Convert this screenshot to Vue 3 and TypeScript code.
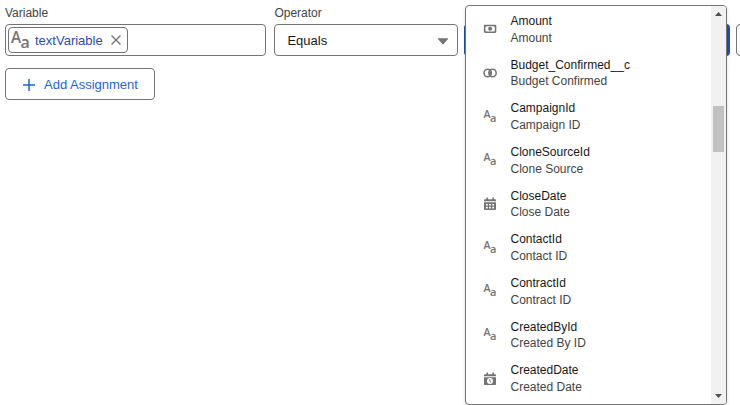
<script setup lang="ts">
type IconKind = 'currency' | 'boolean' | 'text' | 'date' | 'datetime'

interface FieldOption {
  name: string
  label: string
  icon: IconKind
}

const options: FieldOption[] = [
  { name: 'Amount', label: 'Amount', icon: 'currency' },
  { name: 'Budget_Confirmed__c', label: 'Budget Confirmed', icon: 'boolean' },
  { name: 'CampaignId', label: 'Campaign ID', icon: 'text' },
  { name: 'CloneSourceId', label: 'Clone Source', icon: 'text' },
  { name: 'CloseDate', label: 'Close Date', icon: 'date' },
  { name: 'ContactId', label: 'Contact ID', icon: 'text' },
  { name: 'ContractId', label: 'Contract ID', icon: 'text' },
  { name: 'CreatedById', label: 'Created By ID', icon: 'text' },
  { name: 'CreatedDate', label: 'Created Date', icon: 'datetime' },
]
</script>

<template>
  <main class="page">
    <div class="fields">
      <div class="field variable">
        <span class="label">Variable</span>
        <div class="box">
          <div class="pill">
            <svg class="pill-type" viewBox="0 0 20 20">
              <text x="0" y="12.6" font-size="15.3">A</text>
              <text x="9.6" y="18.4" font-size="16">a</text>
            </svg>
            <span class="pill-text">textVariable</span>
            <svg class="close" viewBox="0 0 12 12"><path d="M1.5 1.5l9 9M10.5 1.5l-9 9" /></svg>
          </div>
        </div>
      </div>
      <div class="field operator">
        <span class="label">Operator</span>
        <div class="box select">
          <span>Equals</span>
          <svg class="caret" viewBox="0 0 12 7"><path d="M1.2 .3h9.6q.8 0 .3.7L6.6 6.1q-.6.6-1.2 0L.9 1Q.4.3 1.2.3z" /></svg>
        </div>
      </div>
      <div class="field value">
        <div class="box focused"></div>
        <div class="menu">
          <ul class="list">
            <li v-for="option in options" :key="option.name" class="option">
              <svg class="icon" viewBox="0 0 14 14">
                <template v-if="option.icon === 'text'">
                  <text x="0.5" y="8" font-size="10.6">A</text>
                  <text x="7" y="12" font-size="11">a</text>
                </template>
                <template v-else-if="option.icon === 'currency'">
                  <rect class="line" x="1.6" y="3.4" width="11" height="6.8" rx=".6" />
                  <circle cx="7.1" cy="6.8" r="2" />
                  <path d="M2 4h1.6L2 5.6zM12.2 4h-1.6l1.6 1.6zM2 9.6h1.6L2 8zM12.2 9.6h-1.6L12.2 8z" />
                </template>
                <template v-else-if="option.icon === 'boolean'">
                  <circle class="line" cx="4.7" cy="7" r="3.7" />
                  <circle class="line" cx="9.5" cy="7" r="3.7" />
                  <path d="M7.1 4.6q2.1 2.4 0 4.8q-2.1-2.4 0-4.8z" />
                </template>
                <template v-else>
                  <path d="M3.4 .6h1.7v1.6h4.2V.6H11v1.6h1.2q.8 0 .8.8v1.3H1V3q0-.8.8-.8h1.6z" />
                  <path d="M1 5.3h12v6.9q0 .8-.8.8H1.8q-.8 0-.8-.8z" />
                  <path
                    v-if="option.icon === 'date'"
                    class="cut"
                    d="M3 7h1.8v1.6H3zM6.1 7h1.8v1.6H6.1zM9.2 7H11v1.6H9.2zM3 9.8h1.8v1.6H3zM6.1 9.8h1.8v1.6H6.1zM9.2 9.8H11v1.6H9.2z"
                  />
                  <template v-else>
                    <circle class="cut" cx="7" cy="9.1" r="3" />
                    <path class="hand" d="M6.8 7.2v2l1.4 1.2" />
                  </template>
                </template>
              </svg>
              <div class="copy">
                <span class="name">{{ option.name }}</span>
                <span class="sub">{{ option.label }}</span>
              </div>
            </li>
          </ul>
          <div class="scrollbar">
            <svg class="arrow" viewBox="0 0 7 4"><path d="M3.5 0L7 4H0z" /></svg>
            <div class="track"><div class="thumb"></div></div>
            <svg class="arrow" viewBox="0 0 7 4"><path d="M0 0h7L3.5 4z" /></svg>
          </div>
        </div>
      </div>
      <div class="field next"><div class="box"></div></div>
    </div>
    <button class="add" type="button">
      <svg class="plus" viewBox="0 0 12 12"><path d="M6 0v12M0 6h12" /></svg>
      <span>Add Assignment</span>
    </button>
  </main>
</template>

<style>
body {
  margin: 0;
  background: #fff;
}
</style>

<style scoped>
* {
  box-sizing: border-box;
}
.page {
  width: 740px;
  height: 405px;
  overflow: hidden;
  padding: 5px 0 0 5px;
  font: 13px 'Liberation Sans', Arial, sans-serif;
  color: #181818;
}
.fields {
  display: flex;
  align-items: flex-end;
  height: 51px;
}
.field {
  flex: none;
  position: relative;
}
.label {
  display: block;
  height: 19px;
  line-height: 16px;
  font-size: 12px;
  color: #444;
}
.box {
  height: 32px;
  border: 1px solid #747474;
  border-radius: 4px;
  background: #fff;
}
.variable {
  width: 261px;
  margin-right: 8.4px;
}
.variable .box {
  padding: 2px;
}
.operator {
  width: 183.6px;
  margin-right: 6px;
}
.value {
  width: 266px;
  margin-right: 6px;
}
.next {
  width: 60px;
}
.pill {
  display: flex;
  align-items: center;
  width: 120px;
  height: 26px;
  padding-left: 2px;
  border: 1px solid #747474;
  border-radius: 4px;
}
.pill-type {
  width: 20px;
  height: 20px;
}
.pill-text {
  margin-left: 4px;
  color: #2a4db4;
}
.close {
  width: 12px;
  height: 12px;
  margin-left: 7px;
  fill: none;
  stroke: #747474;
  stroke-width: 1.4;
}
.select {
  display: flex;
  align-items: center;
  justify-content: space-between;
  padding: 0 8px 0 12px;
}
.caret {
  width: 12px;
  height: 7px;
  margin-top: 2px;
  fill: #747474;
}
.focused {
  border: 3px solid #1a4cbd;
}
.menu {
  position: absolute;
  z-index: 2;
  left: 1px;
  top: -19px;
  width: 262px;
  height: 400px;
  display: flex;
  overflow: hidden;
  border: 1px solid #747474;
  border-radius: 4px;
  background: #fff;
  box-shadow: 0 2px 3px rgba(0, 0, 0, 0.16);
}
.list {
  flex: 1;
  margin: 0;
  padding: 1px 0 0 17px;
  list-style: none;
}
.option {
  display: flex;
  align-items: center;
  height: 43.67px;
  padding-top: 1px;
}
.copy {
  display: flex;
  flex-direction: column;
  margin-left: 13.5px;
  margin-top: 0.67px;
  font-size: 12px;
  line-height: 16.5px;
}
.name {
  color: #181818;
}
.sub {
  color: #444;
}
.icon {
  width: 14px;
  height: 14px;
}
.icon,
.pill-type {
  flex: none;
  overflow: visible;
  fill: #747474;
  font-family: 'Open Sans', 'Noto Sans', sans-serif;
  font-weight: 600;
}
.line {
  fill: none;
  stroke: #747474;
  stroke-width: 1.5;
}
.cut {
  fill: #fff;
}
.hand {
  fill: none;
  stroke: #747474;
  stroke-width: 1;
}
.scrollbar {
  width: 15px;
  display: flex;
  flex-direction: column;
  align-items: center;
  justify-content: space-between;
  padding: 6px 0;
  background: #f1f1f1;
}
.arrow {
  width: 7px;
  height: 4px;
  fill: #505050;
}
.track {
  flex: 1;
  padding-top: 90px;
}
.thumb {
  width: 11px;
  height: 46px;
  background: #c1c1c1;
}
.add {
  display: flex;
  align-items: center;
  width: 150px;
  height: 32px;
  margin: 12px 0 0;
  padding: 0 0 0 17px;
  border: 1px solid #747474;
  border-radius: 4px;
  background: #fff;
  color: #1b66d6;
  font: inherit;
}
.plus {
  width: 12px;
  height: 12px;
  margin: 2px 9px 0 0;
  fill: none;
  stroke: #1b66d6;
  stroke-width: 1.5;
}
</style>
